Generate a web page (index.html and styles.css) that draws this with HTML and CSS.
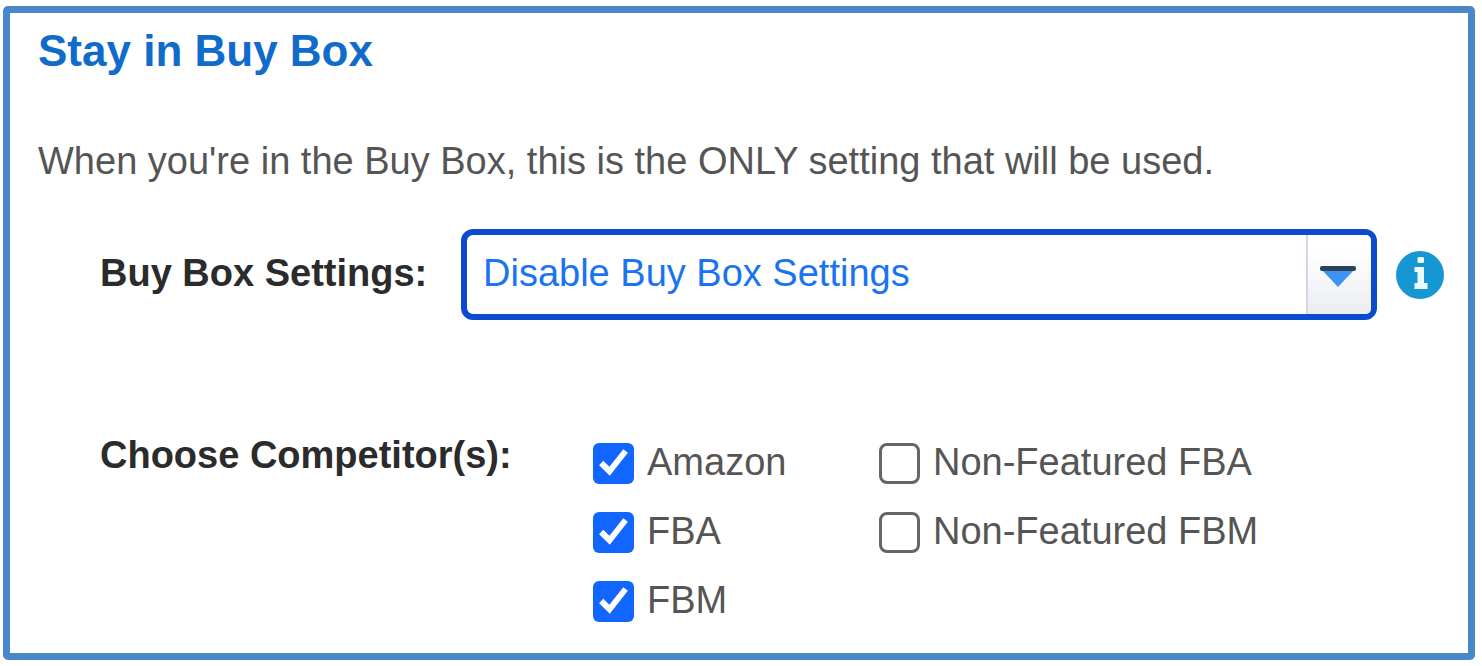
FILE: index.html
```html
<!DOCTYPE html>
<html lang="en">
<head>
    <meta charset="UTF-8">
    <meta name="viewport" content="width=device-width, initial-scale=1.0">
    <title>Stay in Buy Box</title>
    <link rel="stylesheet" href="styles.css">
</head>
<body>
<form class="panel">
    <h2>Stay in Buy Box</h2>
    <p class="intro">When you're in the Buy Box, this is the ONLY setting that will be used.</p>

    <div class="row settings">
        <label class="row-label" for="buybox">Buy Box Settings:</label>
        <div class="field">
            <div class="select-wrap">
                <select id="buybox" name="buybox">
                    <option>Disable Buy Box Settings</option>
                </select>
                <span class="arrow">
                    <svg width="36" height="22" viewBox="0 0 36 22" aria-hidden="true">
                        <path d="M2 4h32L18 21z" fill="#3e94f4"/>
                        <rect x="0" y="0" width="36" height="5" rx="2" fill="#2a4358"/>
                    </svg>
                </span>
            </div>
            <button type="button" class="info" aria-label="More information">
                <svg width="48" height="48" viewBox="0 0 48 48" aria-hidden="true">
                    <circle cx="24" cy="24" r="24" fill="#1797d1"/>
                    <rect x="21.5" y="6" width="6.5" height="6" rx="1.5" fill="#e9fbff"/>
                    <path d="M18.5 16h9.5v16h3.5v6h-13v-6H21.500V21h-3z" fill="#e9fbff"/>
                </svg>
            </button>
        </div>
    </div>

    <div class="row competitors" role="group" aria-labelledby="competitors-label">
        <span class="row-label" id="competitors-label">Choose Competitor(s):</span>
        <div class="options">
            <label class="option"><input type="checkbox" name="amazon" checked>Amazon</label>
            <label class="option"><input type="checkbox" name="nf_fba">Non-Featured FBA</label>
            <label class="option"><input type="checkbox" name="fba" checked>FBA</label>
            <label class="option"><input type="checkbox" name="nf_fbm">Non-Featured FBM</label>
            <label class="option"><input type="checkbox" name="fbm" checked>FBM</label>
        </div>
    </div>
</form>
</body>
</html>
```
FILE: styles.css
```css
* {
    box-sizing: border-box;
}
body {
    font-family: "Liberation Sans", Arial, sans-serif;
    font-size: 38px;
    line-height: 44px;
    color: #555;
    background: white;
    margin: 0;
    padding: 6px 7px 6px 3px;
}
.panel {
    padding: 12px 24px 31px 28px;
    border: 7px solid #4a87ca;
    border-radius: 5px;
}
h2 {
    font-size: 44px;
    line-height: 52px;
    color: #106ccb;
    margin: 0 0 62px;
}
.intro {
    margin: 0 0 46px;
}
.row {
    display: grid;
    grid-template-columns: 361px 1fr;
    margin-left: 62px;
}
.row-label {
    font-weight: bold;
    color: #2b2b2b;
    white-space: nowrap;
}
.settings {
    align-items: center;
    margin-bottom: 113px;
}
.settings .row-label {
    padding-bottom: 4px;
}
.field {
    display: flex;
    align-items: center;
    gap: 19px;
}
.select-wrap {
    position: relative;
    flex: 1;
}
select {
    display: block;
    appearance: none;
    width: 100%;
    height: 91px;
    padding: 0 80px 4px 16px;
    font: inherit;
    color: #1a73f0;
    background: white;
    border: 6px solid #0c4bd0;
    border-radius: 12px;
    outline: none;
}
.arrow {
    position: absolute;
    top: 6px;
    right: 6px;
    bottom: 6px;
    width: 65px;
    display: flex;
    align-items: center;
    justify-content: center;
    padding: 4px 4px 0 0;
    border-left: 2px solid #d3d5e4;
    border-radius: 0 5px 5px 0;
    background: linear-gradient(white 20%, #ebedef);
    pointer-events: none;
}
.info {
    padding: 0;
    border: none;
    background: none;
    cursor: pointer;
}
.info svg {
    display: block;
}
.options {
    display: grid;
    grid-template-columns: 286px 1fr;
    row-gap: 25px;
    padding: 7px 0 0 132px;
}
.option {
    display: flex;
    align-items: flex-end;
    gap: 13px;
}
input {
    appearance: none;
    flex: none;
    width: 41px;
    height: 41px;
    margin: 0;
    border: 3px solid #666;
    border-radius: 8px;
    background: white;
}
input:checked {
    border: none;
    border-radius: 6px;
    background: #1166ff;
}
/* tick mark */
input:checked::before {
    content: "";
    display: block;
    width: 41px;
    height: 41px;
    background: white;
    clip-path: polygon(15% 54%, 25% 43%, 40% 58%, 74% 15%, 85% 24%, 41% 80%);
}
```
